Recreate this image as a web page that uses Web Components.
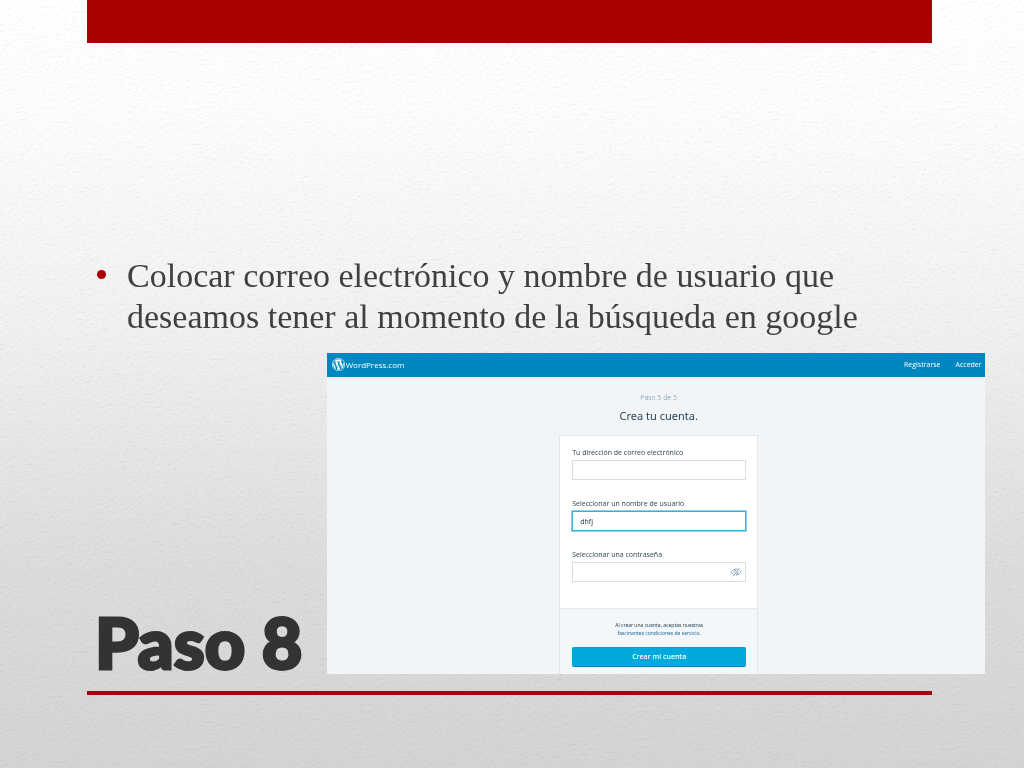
<!DOCTYPE html>
<html lang="es">
<head>
<meta charset="utf-8">
<meta name="viewport" content="width=device-width, initial-scale=1">
<title>Paso 8</title>
<style>
  body {
    margin: 0;
    font-family: "Liberation Serif", "Times New Roman", serif;
    color: #404040;
  }
</style>
</head>
<body>

<step-slide>
  <bullet-list slot="content">
    <li>Colocar correo electrónico y nombre de usuario que deseamos tener al momento de la búsqueda en google</li>
  </bullet-list>
  <span slot="title">Paso 8</span>
  <signup-page slot="media">
    <signup-form></signup-form>
  </signup-page>
</step-slide>

<template id="slide-template">
  <style>
    :host {
      display: flex;
      flex-direction: column;
      position: relative;
      min-height: 100vh;
      box-sizing: border-box;
      padding-left: 8.5%;
      overflow: hidden;
      background: linear-gradient(#fff 0%, #fdfdfd 14%, #f1f1f1 42%, #dcdcdc 74%, #d4d4d4 100%);
    }
    .paper {
      position: absolute;
      inset: 0;
      width: 100%;
      height: 100%;
      mix-blend-mode: multiply;
    }
    .bar,
    .rule {
      position: relative;
      margin-right: 9.8%;
      background: #ac0000;
    }
    .bar {
      height: 43px;
    }
    .rule {
      height: 4px;
      margin-top: 17px;
      margin-bottom: 73px;
      background: #a30812;
    }
    .content {
      position: relative;
      flex: 1;
      display: flex;
      flex-direction: column;
      justify-content: flex-end;
      margin-right: 9.8%;
      padding: 0 8px 16px;
    }
    .row {
      position: relative;
      display: flex;
      align-items: flex-end;
      margin-right: 4.2%;
    }
    h1 {
      flex: 0 0 26.7%;
      min-width: 0;
      box-sizing: border-box;
      margin: 0;
      padding-left: 8px;
      font: 900 70px/64px Impact, Lato, sans-serif;
      color: #333;
      -webkit-text-stroke: 3px #333;
      white-space: nowrap;
    }
    .media {
      flex: 1;
      min-width: 0;
    }
  </style>
  <svg class="paper" aria-hidden="true">
    <filter id="grain" x="0" y="0" width="100%" height="100%" color-interpolation-filters="sRGB">
      <feTurbulence type="fractalNoise" baseFrequency="0.34 0.4" numOctaves="3" seed="8" result="noise"/>
      <feDiffuseLighting in="noise" surfaceScale="1" diffuseConstant="1.1" lighting-color="#fff">
        <feDistantLight azimuth="250" elevation="66"/>
      </feDiffuseLighting>
    </filter>
    <rect width="100%" height="100%" filter="url(#grain)" opacity="0.18"/>
  </svg>
  <div class="bar"></div>
  <div class="content"><slot name="content"></slot></div>
  <div class="row">
    <h1><slot name="title"></slot></h1>
    <div class="media"><slot name="media"></slot></div>
  </div>
  <div class="rule"></div>
</template>

<template id="list-template">
  <style>
    :host {
      display: block;
      font-size: 34px;
      line-height: 41px;
    }
    ul {
      margin: 0;
      padding: 0;
      list-style: none;
    }
    ::slotted(li) {
      display: block;
    }
    .line {
      display: flex;
      gap: 20px;
    }
    .dot {
      flex: none;
      width: 9px;
      height: 9px;
      margin: 15px 1px 0 2px;
      border-radius: 50%;
      background: #ac0000;
    }
  </style>
  <div class="line">
    <span class="dot"></span>
    <ul><slot></slot></ul>
  </div>
</template>

<template id="page-template">
  <style>
    :host {
      display: block;
      background: #f1f5f8;
      font-family: "Open Sans", "Noto Sans", sans-serif;
      color: #2e4453;
    }
    header {
      display: flex;
      align-items: center;
      box-sizing: border-box;
      height: 24px;
      padding: 0 3px 2px 5px;
      background: #0087be;
      font-size: 7px;
    }
    a {
      color: #fff;
      text-decoration: none;
    }
    .brand {
      display: flex;
      align-items: center;
      gap: 1px;
      font-size: 8px;
    }
    .brand svg {
      width: 13px;
      height: 13px;
    }
    nav {
      display: flex;
      gap: 15px;
      margin-left: auto;
      font-weight: 500;
    }
    main {
      display: flex;
      flex-direction: column;
      align-items: center;
      padding: 16px 0 0 6px;
    }
    p {
      margin: 0;
      font-size: 7px;
      line-height: 10px;
      font-weight: 300;
      color: #6b8395;
    }
    h2 {
      margin: 5px 0 12px;
      font-family: "Noto Sans", sans-serif;
      font-size: 11px;
      line-height: 15px;
      font-weight: 400;
    }
  </style>
  <header>
    <a class="brand" href="#">
      <svg viewBox="0 0 24 24" fill="#fff" aria-hidden="true">
        <path d="M12 0a12 12 0 1 0 0 24a12 12 0 0 0 0-24zm0 1.100a10.900 10.900 0 1 1 0 21.800a10.900 10.900 0 0 1 0-21.800z" fill-rule="evenodd"/>
        <path d="M2.300 12c0 3.840 2.230 7.160 5.470 8.730L3.140 8.050A9.660 9.660 0 0 0 2.300 12zM18.550 11.510c0-1.200-.43-2.030-.8-2.680-.49-.8-.95-1.480-.95-2.280 0-.89.68-1.720 1.630-1.720h.13A9.660 9.660 0 0 0 12 2.300a9.690 9.690 0 0 0-8.100 4.370l.62.020c1.020 0 2.590-.12 2.590-.12.520-.03.580.74.060.8 0 0-.53.060-1.110.09l3.540 10.530 2.130-6.380-1.520-4.150c-.52-.03-1.020-.09-1.020-.09-.52-.03-.46-.83.060-.8 0 0 1.610.12 2.570.12 1.020 0 2.590-.12 2.590-.12.520-.03.590.74.060.8 0 0-.53.060-1.110.09l3.510 10.450.97-3.240c.42-1.350.74-2.310.74-3.150zM12.170 12.850l-2.910 8.460a9.700 9.700 0 0 0 5.960-.16zM20.520 7.340c.04.310.07.640.07 1 0 .98-.18 2.080-.74 3.460l-2.960 8.570a9.690 9.690 0 0 0 3.630-13.030z"/>
      </svg>
      WordPress.com
    </a>
    <nav>
      <a href="#">Registrarse</a>
      <a href="#">Acceder</a>
    </nav>
  </header>
  <main>
    <p>Paso 5 de 5</p>
    <h2>Crea tu cuenta.</h2>
    <slot></slot>
  </main>
</template>

<template id="form-template">
  <style>
    :host {
      display: block;
      box-sizing: border-box;
      width: 199px;
      border: 1px solid #e0e8ee;
      border-bottom: 0;
      background: #fff;
      font-size: 7px;
    }
    form {
      margin: 0;
    }
    .fields {
      display: flex;
      flex-direction: column;
      gap: 19px;
      padding: 12px 11px 26px 12px;
    }
    label {
      display: block;
      margin-bottom: 2px;
      line-height: 10px;
      font-weight: 500;
    }
    .box {
      position: relative;
    }
    input {
      display: block;
      box-sizing: border-box;
      width: 100%;
      height: 20px;
      padding: 0 7px;
      border: 1px solid #d3dee6;
      border-radius: 0;
      outline: none;
      background: #fff;
      font: 7px "Noto Sans", sans-serif;
      color: #2e4453;
    }
    input.active {
      border-color: #35b0d8;
      box-shadow: 0 0 0 1px #8fd3ea;
    }
    .toggle {
      position: absolute;
      top: 4px;
      right: 4px;
      width: 12px;
      height: 12px;
      padding: 0;
      border: 0;
      background: none;
    }
    .toggle svg {
      display: block;
      width: 12px;
      height: 12px;
    }
    .terms {
      padding: 12px 11px 7px 12px;
      border-top: 1px solid #e4ebf0;
      background: #f4f7f9;
      text-align: center;
    }
    p {
      margin: 0 0 10px;
      font-family: "Noto Sans", sans-serif;
      font-size: 5px;
      line-height: 8px;
    }
    p a {
      color: #1f6a9c;
      text-decoration: none;
    }
    .submit {
      display: block;
      box-sizing: border-box;
      width: 100%;
      height: 20px;
      padding: 0 0 1px;
      border: 1px solid #00a0d8;
      border-bottom-color: #0087be;
      border-radius: 2px;
      background: #00aadc;
      color: #fff;
      font: 600 7px "Open Sans", sans-serif;
    }
  </style>
  <form>
    <div class="fields">
      <div>
        <label for="email">Tu dirección de correo electrónico</label>
        <input id="email" type="email">
      </div>
      <div>
        <label for="user">Seleccionar un nombre de usuario</label>
        <input id="user" class="active" type="text" value="dhfj">
      </div>
      <div>
        <label for="password">Seleccionar una contraseña</label>
        <div class="box">
          <input id="password" type="password">
          <button class="toggle" type="button" aria-label="Mostrar">
            <svg viewBox="0 0 24 24" fill="none" stroke="#87a6bc" stroke-width="2" aria-hidden="true">
              <path d="M7 18C4 16 2 12 2 12s4-6 10-6c1 0 2 0 3 1M19 8c2 2 3 4 3 4s-4 6-10 6"/>
              <path d="M8 14a4 4 0 0 1 4-5M16 11a4 4 0 0 1-4 5M6 21L19 4"/>
            </svg>
          </button>
        </div>
      </div>
    </div>
    <div class="terms">
      <p>Al crear una cuenta, aceptas nuestras<br><a href="#">fascinantes condiciones de servicio.</a></p>
      <button class="submit" type="submit">Crear mi cuenta</button>
    </div>
  </form>
</template>

<script>
  class StepSlide extends HTMLElement {
    constructor() {
      super();
      this.attachShadow({ mode: "open" });
    }

    connectedCallback() {
      if (this.shadowRoot.childNodes.length) return;
      const template = document.querySelector("#slide-template");
      this.shadowRoot.appendChild(template.content.cloneNode(true));
    }
  }

  class BulletList extends HTMLElement {
    constructor() {
      super();
      this.attachShadow({ mode: "open" });
    }

    connectedCallback() {
      if (this.shadowRoot.childNodes.length) return;
      const template = document.querySelector("#list-template");
      this.shadowRoot.appendChild(template.content.cloneNode(true));
    }
  }

  class SignupPage extends HTMLElement {
    constructor() {
      super();
      this.attachShadow({ mode: "open" });
    }

    connectedCallback() {
      if (this.shadowRoot.childNodes.length) return;
      const template = document.querySelector("#page-template");
      this.shadowRoot.appendChild(template.content.cloneNode(true));
    }
  }

  class SignupForm extends HTMLElement {
    constructor() {
      super();
      this.attachShadow({ mode: "open" });
    }

    connectedCallback() {
      if (this.shadowRoot.childNodes.length) return;
      const template = document.querySelector("#form-template");
      this.shadowRoot.appendChild(template.content.cloneNode(true));
      this.password = this.shadowRoot.querySelector("#password");

      this.shadowRoot.querySelector(".toggle").addEventListener("click", () => {
        this.password.type = this.password.type === "password" ? "text" : "password";
      });
      this.shadowRoot.querySelector("form").addEventListener("submit", (e) => {
        e.preventDefault();
      });
    }
  }

  customElements.define("step-slide", StepSlide);
  customElements.define("bullet-list", BulletList);
  customElements.define("signup-page", SignupPage);
  customElements.define("signup-form", SignupForm);
</script>
</body>
</html>
